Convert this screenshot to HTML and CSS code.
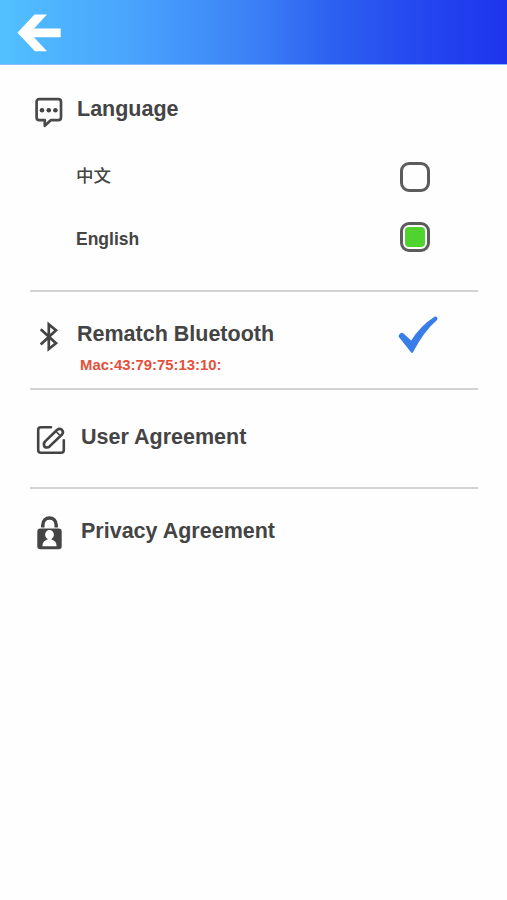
FILE: index.html
```html
<!DOCTYPE html>
<html lang="en">
<head>
<meta charset="utf-8">
<title>Settings</title>
<link rel="stylesheet" href="styles.css">
</head>
<body>
<header class="topbar">
  <svg class="back" viewBox="0 0 44 38"><path d="M.4 18.8 17.5.5H30L17 14.6H43.7V23.2H17L30 37.2H18Z" fill="#fff"/></svg>
</header>
<main class="settings">
  <section class="section language">
    <div class="row heading">
      <svg class="icon chat" viewBox="0 0 30 32" fill="none" stroke="#4a4a4a" stroke-width="2.7" stroke-linejoin="round"><path d="M5.3 3.2H24.3Q27 3.2 27 5.9V21.5Q27 24.1 24.3 24.1H17L10.8 29.8V24.1H5.3Q2.6 24.1 2.6 21.5V5.9Q2.6 3.2 5.3 3.2Z"/><g fill="#444" stroke="none"><circle cx="8" cy="14.2" r="2.3"/><circle cx="14.8" cy="14.2" r="2.3"/><circle cx="21.4" cy="14.2" r="2.3"/></g></svg>
      <h2 class="title">Language</h2>
    </div>
    <div class="row option"><span class="name chinese" lang="zh">中文</span><span class="box"></span></div>
    <div class="row option english"><span class="name">English</span><span class="box checked"></span></div>
  </section>
  <section class="section bluetooth">
    <svg class="icon" viewBox="0 0 20 32" fill="none" stroke="#444" stroke-width="2.7"><path d="M1.7 8.2 17 22.2 9.8 28V3.4L17 9.2 1.7 23.4"/></svg>
    <div class="details">
      <h2 class="title">Rematch Bluetooth</h2>
      <p class="mac">Mac:43:79:75:13:10:</p>
    </div>
    <svg class="tick" viewBox="0 0 40 38"><path d="M.7 20.8Q0 19 2.3 17.4Q4 16 5.8 17.8L13.2 24.6Q22 10 36.5.7Q38 0 39.2 1.2Q40 2.8 38.8 4.2Q26 15 15 36.3Q14 37.5 13 36.3Z" fill="#397de8"/></svg>
  </section>
  <section class="section agreement">
    <svg class="icon" viewBox="0 0 30 30" fill="none" stroke="#444" stroke-width="2.6" stroke-linecap="round"><path d="M15 2.3H5Q2.2 2.3 2.2 5V25Q2.2 27.8 5 27.8H25Q27.8 27.8 27.8 25V15.2"/><path stroke-linejoin="round" d="M8.9 16.6 21.2 4.8Q23.6 2.9 25.9 4.8Q28 7.1 26 9.5L13.6 21.4Q11.5 23.2 8.6 22Q7 19 8.9 16.6Z"/><path stroke-width="1.5" d="M20.9 7.4 23.2 9.6"/></svg>
    <h2 class="title">User Agreement</h2>
  </section>
  <section class="section privacy">
    <svg class="icon" viewBox="0 0 26 34"><path d="M5.8 11.4V9.3C5.8-.4 19.2-.4 19.2 9.3V11.4" fill="none" stroke="#444" stroke-width="3.5"/><rect x=".3" y="12.6" width="24.4" height="20.6" rx="3" fill="#444"/><ellipse cx="12.5" cy="18.7" rx="4.4" ry="4.6" fill="#fff"/><path d="M10.6 21H14.4V23.6Q19.6 25 19.6 30.2H5.4Q5.4 25 10.6 23.6Z" fill="#fff"/></svg>
    <h2 class="title">Privacy Agreement</h2>
  </section>
</main>
</body>
</html>
```

FILE: styles.css
```css
* { box-sizing: border-box; }
body {
  margin: 0;
  min-height: 900px;
  background: #fefefe;
  color: #444;
  font-family: "Liberation Sans", "Noto Sans CJK SC", sans-serif;
}
h2, p { margin: 0; }
svg { display: block; flex: none; }
.topbar {
  height: 65px;
  padding: 14px 0 0 17px;
  background: linear-gradient(90deg, #52c0ff 0%, #48a2fc 27%, #3c82f6 49%, #2c60f0 66%, #2446ef 84%, #1d34ec 100%);
  border-bottom: 1px solid #8dbafa;
}
.back { width: 44px; height: 38px; }
.settings { padding: 0 29px 0 30px; }
.section { border-bottom: 2px solid #d3d3d3; }
.title {
  font-size: 21.5px;
  line-height: 26px;
  font-weight: 700;
  white-space: nowrap;
}
.row { display: flex; }
.language { height: 227px; padding-top: 31px; }
.heading { height: 66px; padding-left: 4px; }
.chat { width: 30px; height: 32px; margin-right: 13px; }
.option {
  height: 60px;
  padding: 0 48px 0 46px;
  justify-content: space-between;
  align-items: flex-start;
}
.name {
  font-size: 17.5px;
  line-height: 30px;
  font-weight: 700;
}
.chinese {
  font-family: "Noto Sans CJK SC", sans-serif;
  font-weight: 500;
  line-height: 26px;
}
.english .name { line-height: 35px; }
.box {
  width: 30px;
  height: 30px;
  border: 3px solid #5c5c5c;
  border-radius: 9px;
  padding: 2px;
}
.checked::before {
  content: "";
  display: block;
  width: 20px;
  height: 20px;
  border-radius: 4px;
  background: #50d32f;
}
.bluetooth {
  display: flex;
  height: 98px;
  padding: 29px 40px 0 9px;
}
.bluetooth .icon { width: 20px; height: 32px; }
.details { margin-left: 18px; flex: 1; }
.mac {
  margin: 9px 0 0 3px;
  color: #e4513b;
  font-size: 14.9px;
  line-height: 18px;
  font-weight: 700;
}
.tick { width: 40px; height: 38px; margin-top: -5px; }
.agreement {
  display: flex;
  height: 99px;
  padding: 34px 0 0 6px;
}
.agreement .icon { width: 30px; height: 30px; margin: 1px 15px 0 0; }
.privacy {
  display: flex;
  padding: 27px 0 0 7px;
  border: 0;
}
.privacy .icon { width: 26px; height: 34px; margin-right: 18px; }
.privacy .title { margin-top: 2px; }
```
